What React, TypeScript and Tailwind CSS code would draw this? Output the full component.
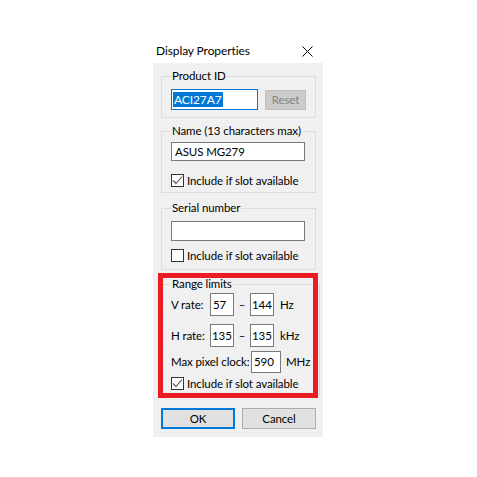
import React from "react";

function CheckBox({ checked }: { checked?: boolean }) {
  return (
    <div className="w-[13px] h-[13px] border border-[#333333] bg-white shrink-0 flex items-center justify-center">
      {checked && (
        <svg width="11" height="11" viewBox="0 0 11 11">
          <polyline points="1,5.5 4,8.5 10,1.5" fill="none" stroke="#4d4d4d" strokeWidth="1.1" />
        </svg>
      )}
    </div>
  );
}

function CheckRow({ checked, className }: { checked?: boolean; className?: string }) {
  return (
    <div className={"flex items-center h-[15px] " + (className ?? "")}>
      <CheckBox checked={checked} />
      <span className="ml-[3px] leading-[15px] whitespace-nowrap">Include if slot available</span>
    </div>
  );
}

function Box({ children, className }: { children?: React.ReactNode; className?: string }) {
  return (
    <div className={"border border-[#7a7a7a] bg-white flex items-center " + (className ?? "")}>
      {children}
    </div>
  );
}

export default function App() {
  return (
    <div className="w-[477px] h-[477px] bg-white pt-[36px] pl-[153px] font-['Lato',sans-serif] text-[11.5px] tracking-[-0.1px] text-black">
      <div className="w-[170px]">
        <div className="h-[27px] flex items-center justify-between pl-[3px] pr-[10px]">
          <span className="leading-[16px] mt-[2px] whitespace-nowrap text-[12px]">Display Properties</span>
          <svg width="11" height="11" viewBox="0 0 11 11" className="mt-[3px]">
            <line x1="0.5" y1="0.5" x2="10.5" y2="10.5" stroke="#000" strokeWidth="1" />
            <line x1="10.5" y1="0.5" x2="0.5" y2="10.5" stroke="#000" strokeWidth="1" />
          </svg>
        </div>
        <div className="relative bg-[#f0f0f0] h-[374px] pl-[8px] pr-[7px] pt-[5px]">
          {/* Product ID */}
          <fieldset className="border border-[#dcdcdc] px-[9px] pb-[7px]">
            <legend className="px-[1px] leading-[16px] whitespace-nowrap">Product ID</legend>
            <div className="flex items-center mt-[5px]">
              <div className="w-[87px] h-[21px] border border-[#0078d7] bg-white flex items-center pl-[1px]">
                <span className="bg-[#0078d7] text-white leading-[15px] px-[1px] text-[12px]">ACI27A7</span>
              </div>
              <div className="ml-[7px] w-[41px] h-[20px] border border-[#bfbfbf] bg-[#cccccc] text-[#838383] flex items-center justify-center leading-[16px]">
                Reset
              </div>
            </div>
          </fieldset>

          {/* Name */}
          <fieldset className="mt-[5px] border border-[#dcdcdc] px-[9px] pb-[4px]">
            <legend className="px-[1px] leading-[16px] whitespace-nowrap">Name (13 characters max)</legend>
            <Box className="mt-[3px] w-[134px] h-[19px] pl-[3px]">
              <span className="leading-[16px]">ASUS MG279</span>
            </Box>
            <CheckRow checked className="mt-[12px]" />
          </fieldset>

          {/* Serial number */}
          <fieldset className="mt-[7px] border border-[#dcdcdc] px-[9px] pb-[6px]">
            <legend className="px-[1px] leading-[16px] whitespace-nowrap">Serial number</legend>
            <Box className="mt-[5px] w-[134px] h-[20px]" />
            <CheckRow className="mt-[7px]" />
          </fieldset>

          {/* Range limits */}
          <fieldset className="mt-[6px] border border-[#dcdcdc] px-[9px] pb-[4px]">
            <legend className="px-[1px] leading-[16px] whitespace-nowrap">Range limits</legend>
            <div className="flex items-center mt-[1px] h-[23px]">
              <span className="w-[39px] leading-[16px] whitespace-nowrap">V rate:</span>
              <Box className="w-[24px] h-[23px] pl-[2px]"><span className="leading-[16px]">57</span></Box>
              <span className="w-[16px] text-center leading-[16px]">–</span>
              <Box className="w-[24px] h-[23px] pl-[1px]"><span className="leading-[16px]">144</span></Box>
              <span className="ml-[6px] leading-[16px]">Hz</span>
            </div>
            <div className="flex items-center mt-[8px] h-[23px]">
              <span className="w-[39px] leading-[16px] whitespace-nowrap">H rate:</span>
              <Box className="w-[24px] h-[23px] pl-[1px]"><span className="leading-[16px]">135</span></Box>
              <span className="w-[16px] text-center leading-[16px]">–</span>
              <Box className="w-[24px] h-[23px] pl-[1px]"><span className="leading-[16px]">135</span></Box>
              <span className="ml-[6px] leading-[16px]">kHz</span>
            </div>
            <div className="flex items-center mt-[4px] h-[22px]">
              <span className="w-[80px] leading-[16px] whitespace-nowrap">Max pixel clock:</span>
              <Box className="w-[30px] h-[22px] pl-[2px]"><span className="leading-[16px]">590</span></Box>
              <span className="ml-[5px] leading-[16px]">MHz</span>
            </div>
            <CheckRow checked className="mt-[3px]" />
          </fieldset>

          {/* Buttons */}
          <div className="flex mt-[12px]">
            <div className="w-[74px] h-[21px] border-2 border-[#0078d7] bg-[#e1e1e1] flex items-center justify-center leading-[16px]">
              OK
            </div>
            <div className="ml-[7px] w-[74px] h-[21px] border border-[#adadad] bg-[#e1e1e1] flex items-center justify-center leading-[16px]">
              Cancel
            </div>
          </div>

          {/* Red highlight annotation */}
          <div className="absolute left-[5px] top-[210px] w-[160px] h-[125px] border-[5px] border-[#ed1c24] pointer-events-none" />
        </div>
      </div>
    </div>
  );
}
